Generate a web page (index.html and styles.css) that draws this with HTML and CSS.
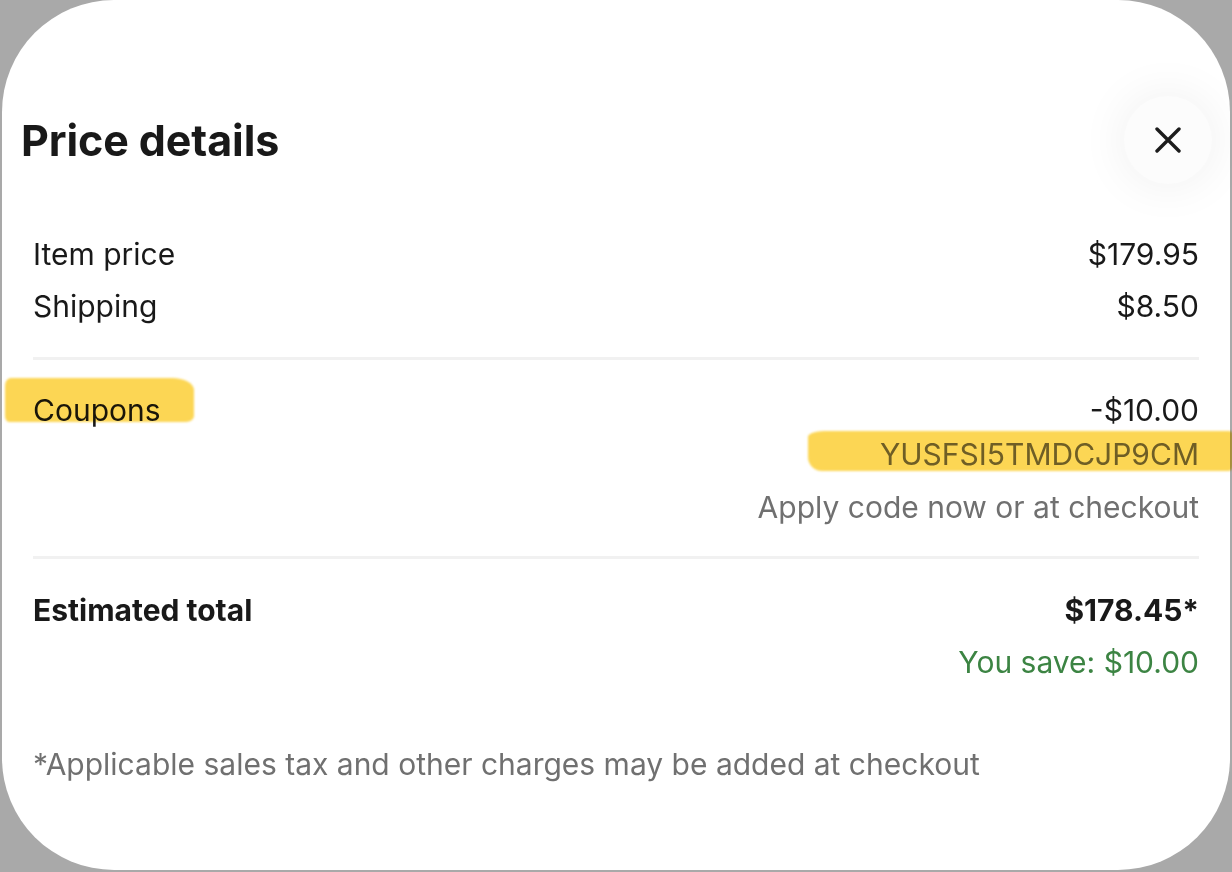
FILE: index.html
```html
<!DOCTYPE html>
<html lang="en">
<head>
<meta charset="utf-8">
<title>Price details</title>
<link rel="stylesheet" href="styles.css">
</head>
<body>
<div class="sheet">
  <header class="sheet-header">
    <h1 class="title">Price details</h1>
    <button class="close" aria-label="Close">
      <svg width="26" height="26" viewBox="0 0 26 26" aria-hidden="true">
        <path d="M2 2 L24 24 M24 2 L2 24" stroke="#1c1c1c" stroke-width="3.4" stroke-linecap="round" fill="none"/>
      </svg>
    </button>
  </header>

  <section class="group">
    <div class="row"><span class="label">Item price</span><span class="value">$179.95</span></div>
    <div class="row"><span class="label">Shipping</span><span class="value">$8.50</span></div>
  </section>

  <hr class="divider">

  <section class="group coupons">
    <div class="row">
      <span class="label marked">Coupons<span class="marker marker-a"></span></span>
      <div class="stack">
        <span class="value">-$10.00</span>
        <span class="code marked">YUSFSI5TMDCJP9CM<span class="marker marker-b"></span></span>
        <span class="muted">Apply code now or at checkout</span>
      </div>
    </div>
  </section>

  <hr class="divider divider-lower">

  <section class="group total">
    <div class="row">
      <span class="label strong">Estimated total</span>
      <div class="stack">
        <span class="value strong">$178.45*</span>
        <span class="save">You save: $10.00</span>
      </div>
    </div>
  </section>

  <p class="note">*Applicable sales tax and other charges may be added at checkout</p>
</div>
</body>
</html>
```

FILE: styles.css
```css
html, body {
  margin: 0;
  padding: 0;
}
body {
  background: #a9a9a9;
  width: 1232px;
  height: 872px;
  overflow: hidden;
  font-family: Inter, "Liberation Sans", sans-serif;
  color: #191919;
}
.sheet {
  position: relative;
  box-sizing: border-box;
  margin: 0 2px 0 2px;
  height: 870px;
  background: #ffffff;
  border-radius: 112px;
  padding: 96px 31px 0 31px;
}
.sheet-header {
  display: flex;
  align-items: center;
  justify-content: space-between;
  height: 88px;
  margin: 0 -13px 0 -12px;
}
.title {
  margin: 0;
  font-size: 43px;
  font-weight: 700;
  line-height: 88px;
  letter-spacing: -0.1px;
}
.close {
  width: 88px;
  height: 88px;
  border: 0;
  border-radius: 50%;
  background: #fcfcfc;
  box-shadow: 0 0 50px rgba(0, 0, 0, 0.07);
  display: flex;
  align-items: center;
  justify-content: center;
  padding: 0;
}
.group {
  font-size: 30px;
}
.group:first-of-type {
  margin-top: 44px;
}
.row {
  display: flex;
  justify-content: space-between;
  align-items: flex-start;
  line-height: 52px;
}
.stack {
  display: flex;
  flex-direction: column;
  align-items: flex-end;
}
.coupons {
  margin-top: 28px;
}
.coupons .row {
  line-height: 44px;
}
.coupons .muted {
  margin-top: 9px;
}
.divider {
  border: 0;
  height: 3px;
  background: #f1f1f1;
  margin: 25px 0 0 0;
}
.divider-lower {
  margin-top: 27px;
}
.total {
  margin-top: 26px;
}
.total .row {
  line-height: 50px;
}
.total .save {
  margin-top: 2px;
}
.strong {
  font-weight: 700;
}
.muted, .code {
  color: #707070;
}
.save {
  color: #3c8443;
}
.note {
  margin: 53px 0 0 0;
  font-size: 30px;
  line-height: 48px;
  color: #707070;
}
.marked {
  position: relative;
  display: inline-block;
}
.marker {
  position: absolute;
  background: #fcd654;
  mix-blend-mode: multiply;
  filter: blur(1px);
  pointer-events: none;
}
.marker-a {
  left: -28px;
  right: -33px;
  top: -10px;
  bottom: 10px;
  border-radius: 6px 22px 8px 4px / 8px 12px 6px 6px;
}
.marker-b {
  left: -72px;
  right: -34px;
  top: -1px;
  bottom: 5px;
  border-radius: 16px 4px 4px 14px / 6px 4px 6px 14px;
}
```
